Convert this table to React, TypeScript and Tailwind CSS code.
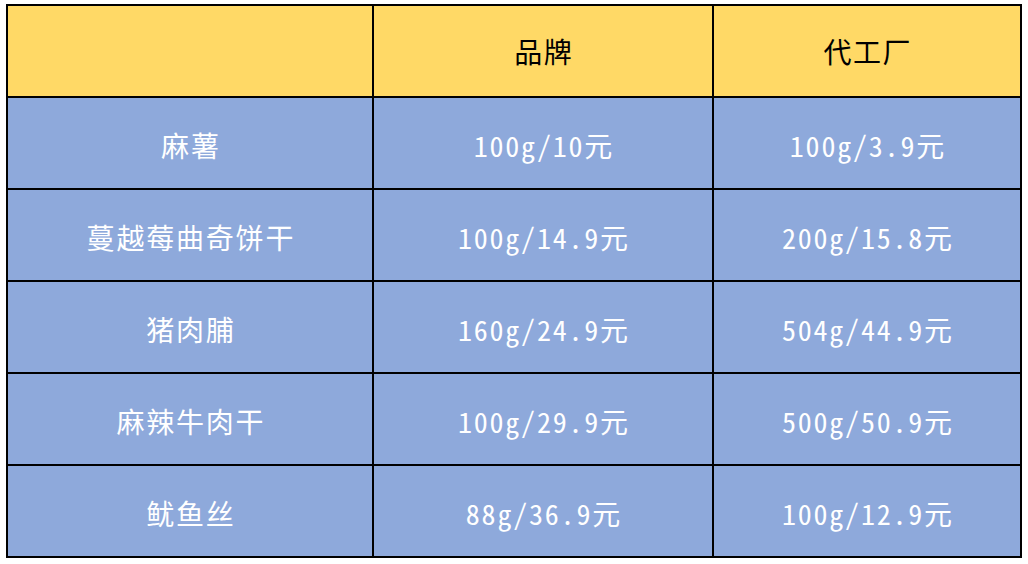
import React from "react";

const rows: [string, string, string][] = [
  ["麻薯", "100g/10元", "100g/3.9元"],
  ["蔓越莓曲奇饼干", "100g/14.9元", "200g/15.8元"],
  ["猪肉脯", "160g/24.9元", "504g/44.9元"],
  ["麻辣牛肉干", "100g/29.9元", "500g/50.9元"],
  ["鱿鱼丝", "88g/36.9元", "100g/12.9元"],
];

const font = {
  fontFamily: '"Noto Sans Mono CJK SC", "Noto Sans CJK SC", "Liberation Mono", monospace',
};

export default function App() {
  return (
    <div className="w-[1028px] h-[564px] bg-white pt-[4px] pl-[6px]" style={font}>
      <div className="grid grid-cols-[364px_338px_306px] auto-rows-[90px] gap-[2px] p-[2px] bg-black w-[1016px]">
        <div className="bg-[#FFD966]" />
        <div className="bg-[#FFD966] flex items-center justify-center text-[28px] text-black font-medium tracking-[1.5px] pl-[1.5px]">品牌</div>
        <div className="bg-[#FFD966] flex items-center justify-center text-[28px] text-black font-medium tracking-[1.5px] pl-[1.5px]">代工厂</div>
        {rows.map((r, i) => (
          <React.Fragment key={i}>
            {r.map((c, j) => (
              <div
                key={j}
                className="bg-[#8EA9DB] flex items-center justify-center text-[28px] text-white font-light tracking-[1.8px] pl-[1.8px] pt-[4px]"
              >
                {c}
              </div>
            ))}
          </React.Fragment>
        ))}
      </div>
    </div>
  );
}
